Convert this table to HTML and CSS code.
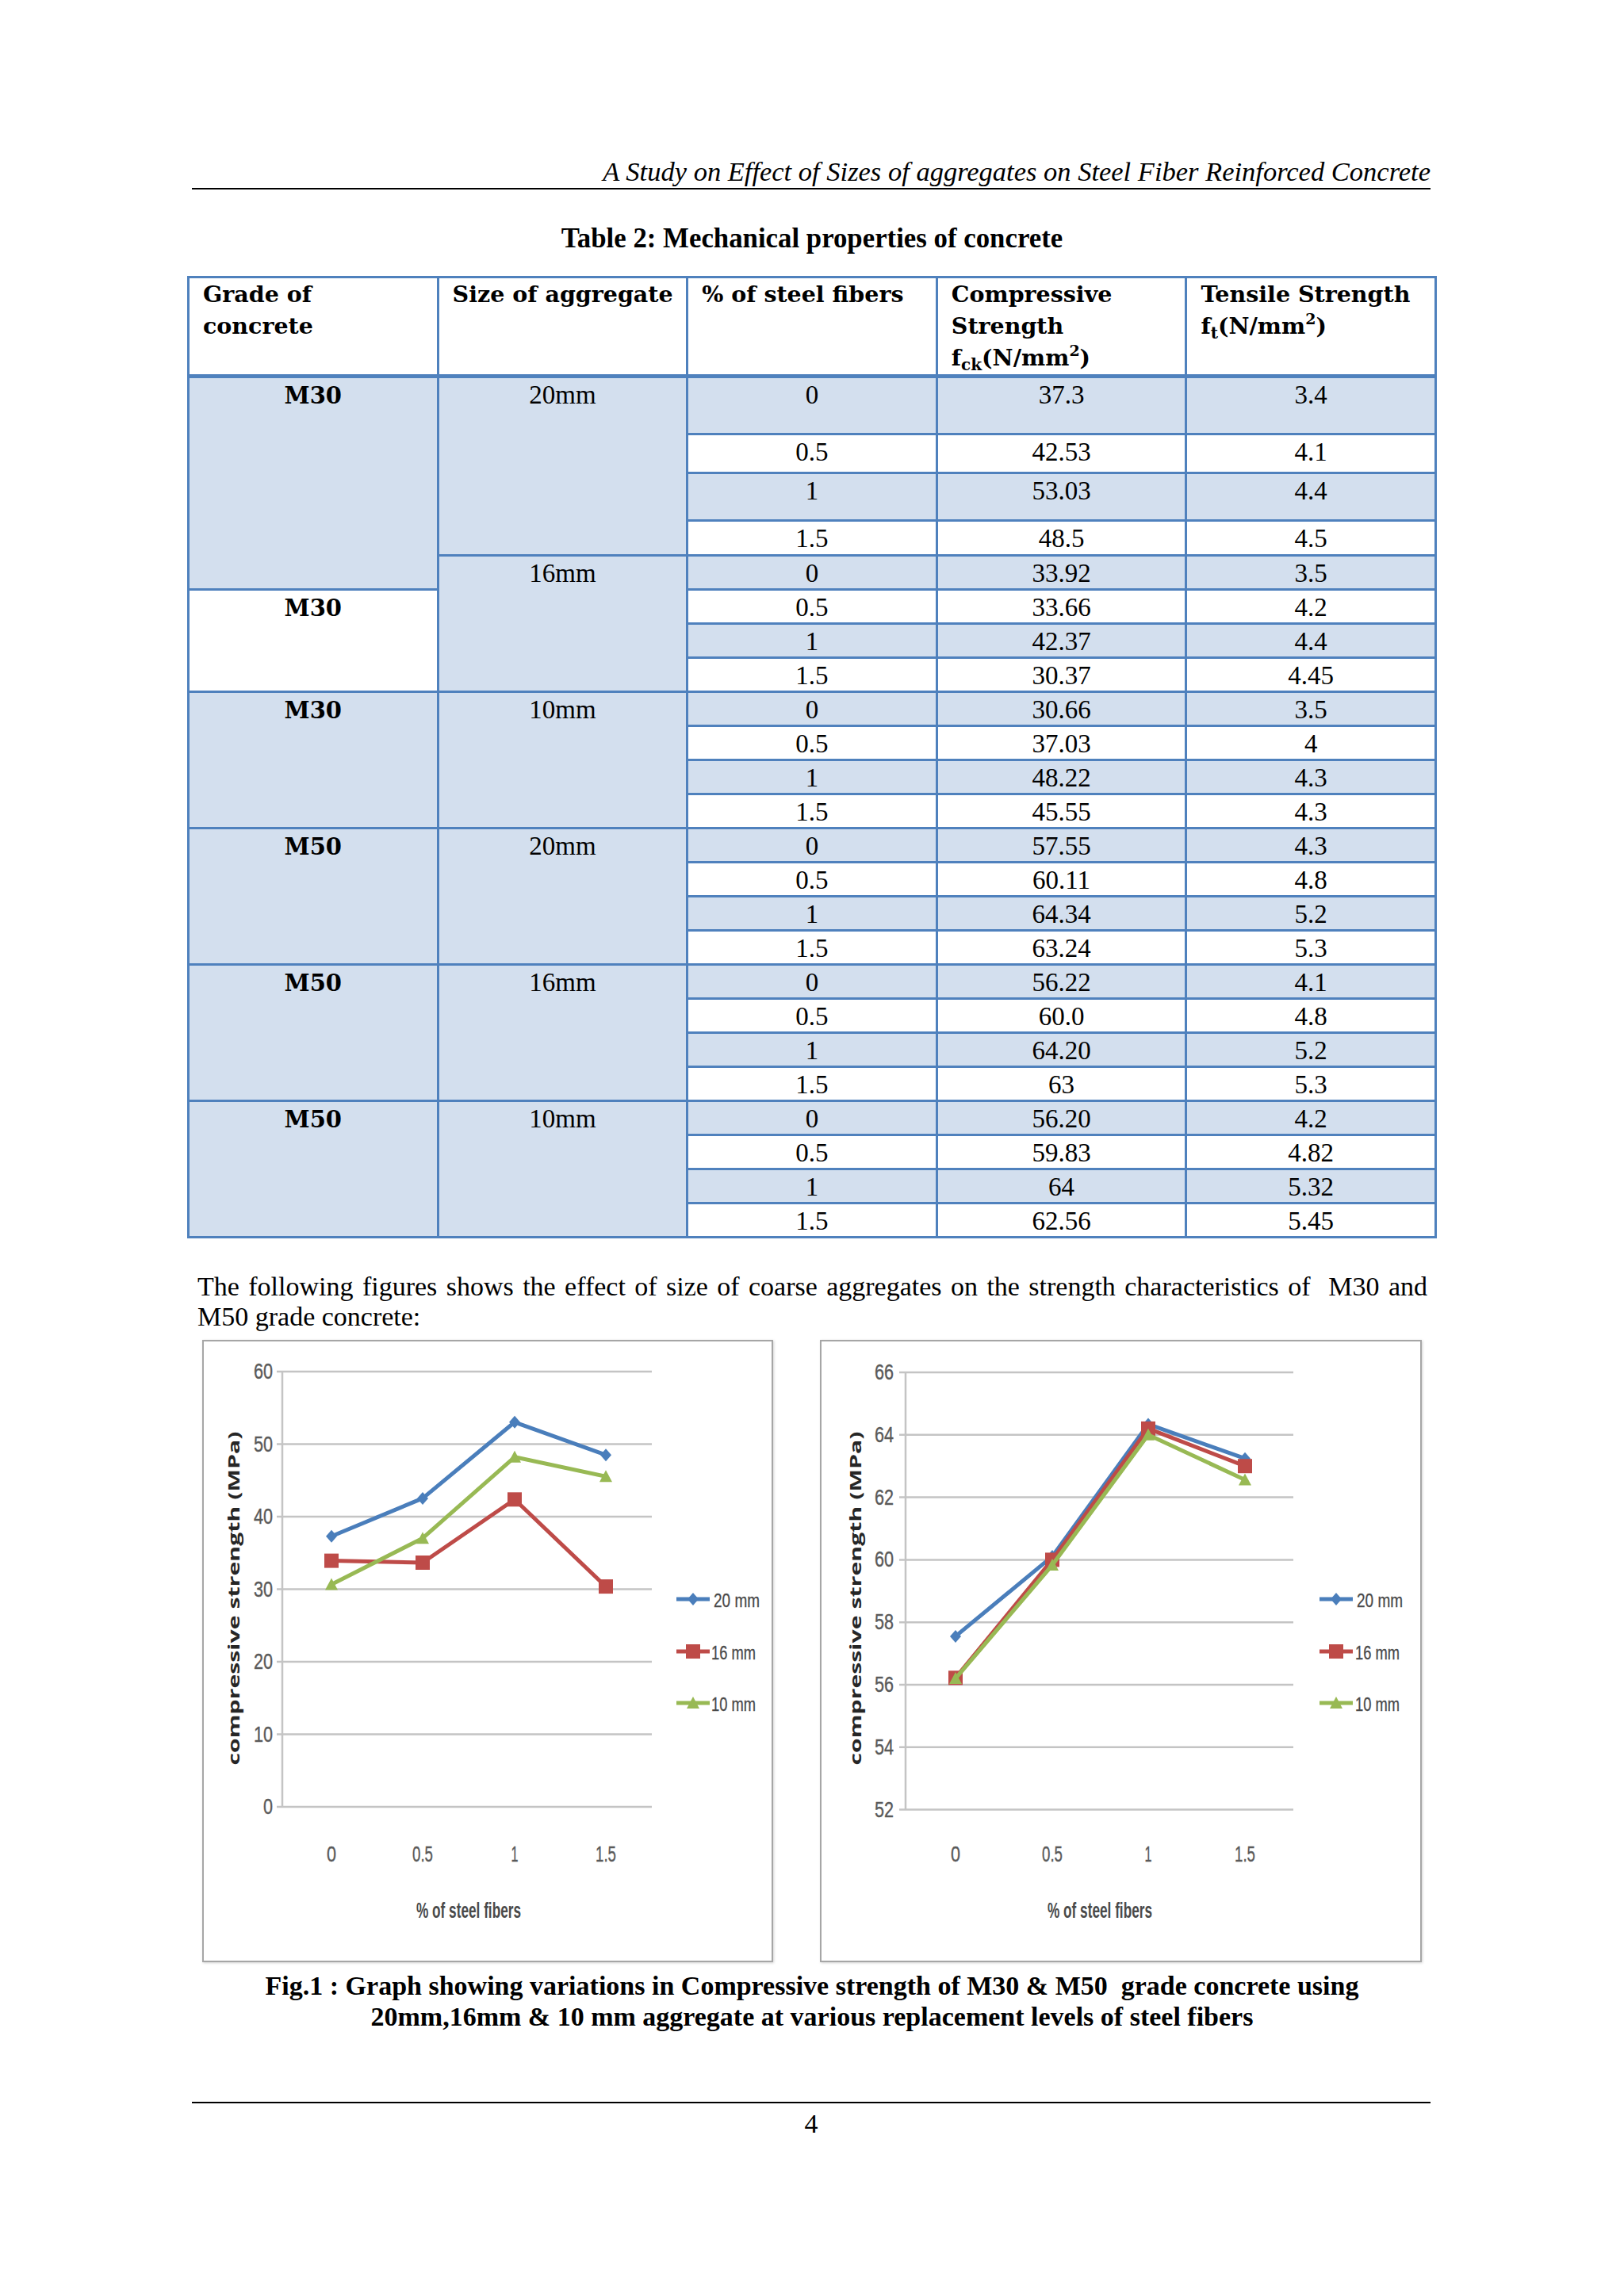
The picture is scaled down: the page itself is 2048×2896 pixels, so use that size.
FILE: index.html
```html
<!DOCTYPE html>
<html lang="en">
<head>
<meta charset="utf-8">
<title>A Study on Effect of Sizes of aggregates on Steel Fiber Reinforced Concrete</title>
<link rel="stylesheet" href="styles.css">
</head>
<body>
<div class="page">
  <div class="running-head">A Study on Effect of Sizes of aggregates on Steel Fiber Reinforced Concrete</div>
  <div class="table-caption">Table 2: Mechanical properties of concrete</div>

  <div class="grid-table">
    <div class="cell head">Grade of<br>concrete</div>
    <div class="cell head">Size of aggregate</div>
    <div class="cell head">% of steel fibers</div>
    <div class="cell head">Compressive<br>Strength<br>f<span class="sub">ck</span>(N/mm<span class="sup">2</span>)</div>
    <div class="cell head">Tensile Strength<br>f<span class="sub">t</span>(N/mm<span class="sup">2</span>)</div>

    <div class="cell grade shade span5">M30</div>
    <div class="cell shade span4">20mm</div>
    <div class="cell shade">0</div><div class="cell shade">37.3</div><div class="cell shade">3.4</div>
    <div class="cell">0.5</div><div class="cell">42.53</div><div class="cell">4.1</div>
    <div class="cell shade">1</div><div class="cell shade">53.03</div><div class="cell shade">4.4</div>
    <div class="cell">1.5</div><div class="cell">48.5</div><div class="cell">4.5</div>

    <div class="cell shade span4">16mm</div>
    <div class="cell shade">0</div><div class="cell shade">33.92</div><div class="cell shade">3.5</div>
    <div class="cell grade span3">M30</div>
    <div class="cell">0.5</div><div class="cell">33.66</div><div class="cell">4.2</div>
    <div class="cell shade">1</div><div class="cell shade">42.37</div><div class="cell shade">4.4</div>
    <div class="cell">1.5</div><div class="cell">30.37</div><div class="cell">4.45</div>

    <div class="cell grade shade span4">M30</div>
    <div class="cell shade span4">10mm</div>
    <div class="cell shade">0</div><div class="cell shade">30.66</div><div class="cell shade">3.5</div>
    <div class="cell">0.5</div><div class="cell">37.03</div><div class="cell">4</div>
    <div class="cell shade">1</div><div class="cell shade">48.22</div><div class="cell shade">4.3</div>
    <div class="cell">1.5</div><div class="cell">45.55</div><div class="cell">4.3</div>

    <div class="cell grade shade span4">M50</div>
    <div class="cell shade span4">20mm</div>
    <div class="cell shade">0</div><div class="cell shade">57.55</div><div class="cell shade">4.3</div>
    <div class="cell">0.5</div><div class="cell">60.11</div><div class="cell">4.8</div>
    <div class="cell shade">1</div><div class="cell shade">64.34</div><div class="cell shade">5.2</div>
    <div class="cell">1.5</div><div class="cell">63.24</div><div class="cell">5.3</div>

    <div class="cell grade shade span4">M50</div>
    <div class="cell shade span4">16mm</div>
    <div class="cell shade">0</div><div class="cell shade">56.22</div><div class="cell shade">4.1</div>
    <div class="cell">0.5</div><div class="cell">60.0</div><div class="cell">4.8</div>
    <div class="cell shade">1</div><div class="cell shade">64.20</div><div class="cell shade">5.2</div>
    <div class="cell">1.5</div><div class="cell">63</div><div class="cell">5.3</div>

    <div class="cell grade shade span4">M50</div>
    <div class="cell shade span4">10mm</div>
    <div class="cell shade">0</div><div class="cell shade">56.20</div><div class="cell shade">4.2</div>
    <div class="cell">0.5</div><div class="cell">59.83</div><div class="cell">4.82</div>
    <div class="cell shade">1</div><div class="cell shade">64</div><div class="cell shade">5.32</div>
    <div class="cell">1.5</div><div class="cell">62.56</div><div class="cell">5.45</div>
  </div>

  <p class="lead">The following figures shows the effect of size of coarse aggregates on the strength characteristics of&nbsp; M30 and M50 grade concrete:</p>

  <div class="figures">
    <div class="chart chart-a">
      <svg class="plot" width="716" height="781" viewBox="2 2 716 781">
        <defs>
          <marker id="mk-dia" viewBox="-9 -9 18 18" markerWidth="18" markerHeight="18" markerUnits="userSpaceOnUse" refX="0" refY="0"><path d="M0 -8L7 0 0 8 -7 0z" fill="#4a7ebb"/></marker>
          <marker id="mk-sq" viewBox="-10 -10 20 20" markerWidth="20" markerHeight="20" markerUnits="userSpaceOnUse" refX="0" refY="0"><rect x="-9" y="-9" width="18" height="18" fill="#be4b48"/></marker>
          <marker id="mk-tri" viewBox="-10 -10 20 20" markerWidth="20" markerHeight="20" markerUnits="userSpaceOnUse" refX="0" refY="0"><path d="M0 -8L8 7 -8 7z" fill="#98b954"/></marker>
        </defs>
        <g class="grid">
          <line x1="94" y1="40" x2="567" y2="40"/>
          <line x1="94" y1="131.5" x2="567" y2="131.5"/>
          <line x1="94" y1="223" x2="567" y2="223"/>
          <line x1="94" y1="314.5" x2="567" y2="314.5"/>
          <line x1="94" y1="406" x2="567" y2="406"/>
          <line x1="94" y1="497.5" x2="567" y2="497.5"/>
          <line x1="94" y1="589" x2="567" y2="589"/>
          <line x1="101" y1="40" x2="101" y2="589"/>
        </g>
        <g class="tick">
          <text x="89" y="49" text-anchor="end" textLength="24" lengthAdjust="spacingAndGlyphs">60</text>
          <text x="89" y="140.5" text-anchor="end" textLength="24" lengthAdjust="spacingAndGlyphs">50</text>
          <text x="89" y="232" text-anchor="end" textLength="24" lengthAdjust="spacingAndGlyphs">40</text>
          <text x="89" y="323.5" text-anchor="end" textLength="24" lengthAdjust="spacingAndGlyphs">30</text>
          <text x="89" y="415" text-anchor="end" textLength="24" lengthAdjust="spacingAndGlyphs">20</text>
          <text x="89" y="506.5" text-anchor="end" textLength="24" lengthAdjust="spacingAndGlyphs">10</text>
          <text x="89" y="598" text-anchor="end" textLength="12" lengthAdjust="spacingAndGlyphs">0</text>
          <text x="163" y="658" text-anchor="middle" textLength="12" lengthAdjust="spacingAndGlyphs">0</text>
          <text x="278" y="658" text-anchor="middle" textLength="26" lengthAdjust="spacingAndGlyphs">0.5</text>
          <text x="394" y="658" text-anchor="middle" textLength="9" lengthAdjust="spacingAndGlyphs">1</text>
          <text x="509" y="658" text-anchor="middle" textLength="26" lengthAdjust="spacingAndGlyphs">1.5</text>
        </g>
        <text class="axis-title" x="336" y="729" text-anchor="middle" textLength="132" lengthAdjust="spacingAndGlyphs">% of steel fibers</text>
        <text class="y-title" x="0" y="0" transform="translate(47 326) rotate(-90)" text-anchor="middle" textLength="421" lengthAdjust="spacingAndGlyphs">compressive strength (MPa)</text>
        <polyline class="series s-blue" points="163,247.7 278,199.9 394,103.8 509,145.2"/>
        <polyline class="series s-red" points="163,278.6 278,281 394,201.3 509,311.1"/>
        <polyline class="series s-green" points="163,308.5 278,250.2 394,147.8 509,172.2"/>
        <path class="key s-blue" d="M598 327H619H640"/>
        <path class="key s-red" d="M598 393H619H640"/>
        <path class="key s-green" d="M598 458H619H640"/>
        <g class="legend">
          <text x="645" y="337" textLength="58" lengthAdjust="spacingAndGlyphs">20 mm</text>
          <text x="642" y="403" textLength="56" lengthAdjust="spacingAndGlyphs">16 mm</text>
          <text x="642" y="468" textLength="56" lengthAdjust="spacingAndGlyphs">10 mm</text>
        </g>
      </svg>
    </div>
    <div class="chart chart-b">
      <svg class="plot" width="755" height="781" viewBox="2 2 755 781">
        <g class="grid">
          <line x1="100" y1="41" x2="597" y2="41"/>
          <line x1="100" y1="119.8" x2="597" y2="119.8"/>
          <line x1="100" y1="198.6" x2="597" y2="198.6"/>
          <line x1="100" y1="277.4" x2="597" y2="277.4"/>
          <line x1="100" y1="356.2" x2="597" y2="356.2"/>
          <line x1="100" y1="435" x2="597" y2="435"/>
          <line x1="100" y1="513.8" x2="597" y2="513.8"/>
          <line x1="100" y1="592.6" x2="597" y2="592.6"/>
          <line x1="108" y1="41" x2="108" y2="592.6"/>
        </g>
        <g class="tick">
          <text x="93" y="50" text-anchor="end" textLength="24" lengthAdjust="spacingAndGlyphs">66</text>
          <text x="93" y="128.8" text-anchor="end" textLength="24" lengthAdjust="spacingAndGlyphs">64</text>
          <text x="93" y="207.6" text-anchor="end" textLength="24" lengthAdjust="spacingAndGlyphs">62</text>
          <text x="93" y="286.4" text-anchor="end" textLength="24" lengthAdjust="spacingAndGlyphs">60</text>
          <text x="93" y="365.2" text-anchor="end" textLength="24" lengthAdjust="spacingAndGlyphs">58</text>
          <text x="93" y="444" text-anchor="end" textLength="24" lengthAdjust="spacingAndGlyphs">56</text>
          <text x="93" y="522.8" text-anchor="end" textLength="24" lengthAdjust="spacingAndGlyphs">54</text>
          <text x="93" y="601.6" text-anchor="end" textLength="24" lengthAdjust="spacingAndGlyphs">52</text>
          <text x="171" y="658" text-anchor="middle" textLength="12" lengthAdjust="spacingAndGlyphs">0</text>
          <text x="293" y="658" text-anchor="middle" textLength="26" lengthAdjust="spacingAndGlyphs">0.5</text>
          <text x="414" y="658" text-anchor="middle" textLength="9" lengthAdjust="spacingAndGlyphs">1</text>
          <text x="536" y="658" text-anchor="middle" textLength="26" lengthAdjust="spacingAndGlyphs">1.5</text>
        </g>
        <text class="axis-title" x="353" y="729" text-anchor="middle" textLength="132" lengthAdjust="spacingAndGlyphs">% of steel fibers</text>
        <text class="y-title" x="0" y="0" transform="translate(52 326) rotate(-90)" text-anchor="middle" textLength="421" lengthAdjust="spacingAndGlyphs">compressive strength (MPa)</text>
        <polyline class="series s-blue" points="171,373.9 293,273.1 414,106.4 536,149.7"/>
        <polyline class="series s-red" points="171,426.3 293,277.4 414,111.9 536,159.2"/>
        <polyline class="series s-green" points="171,427.1 293,284.1 414,119.8 536,176.5"/>
        <path class="key s-blue" d="M630 327H651H672"/>
        <path class="key s-red" d="M630 393H651H672"/>
        <path class="key s-green" d="M630 458H651H672"/>
        <g class="legend">
          <text x="677" y="337" textLength="58" lengthAdjust="spacingAndGlyphs">20 mm</text>
          <text x="675" y="403" textLength="56" lengthAdjust="spacingAndGlyphs">16 mm</text>
          <text x="675" y="468" textLength="56" lengthAdjust="spacingAndGlyphs">10 mm</text>
        </g>
      </svg>
    </div>
  </div>

  <div class="fig-caption">Fig.1 : Graph showing variations in Compressive strength of M30 &amp; M50&nbsp; grade concrete using<br>20mm,16mm &amp; 10 mm aggregate at various replacement levels of steel fibers</div>

  <div class="page-foot">4</div>
</div>
</body>
</html>
```

FILE: styles.css
```css
html, body {
  margin: 0;
  padding: 0;
  background: #ffffff;
  color: #000000;
}

.page {
  width: 1576px;
  margin-left: 236px;
  font-family: "Liberation Serif", "Times New Roman", serif;
}

.running-head {
  margin: 196px 8px 0 6px;
  padding-bottom: 1px;
  border-bottom: 2px solid #000;
  font-style: italic;
  font-size: 34.5px;
  line-height: 40px;
  text-align: right;
}

.table-caption {
  margin-top: 42px;
  font-weight: bold;
  font-size: 34.8px;
  line-height: 40px;
  text-align: center;
}

.grid-table {
  margin-top: 27px;
  display: grid;
  grid-template-columns: repeat(5, 1fr);
  grid-template-rows: 123px 69px 46px 57px 41px repeat(20, 40px);
  gap: 3px;
  padding: 3px;
  background: #4f81bd;
}

.cell {
  background: #ffffff;
  text-align: center;
  font-size: 33px;
  line-height: 36px;
  padding-top: 3px;
  box-sizing: border-box;
  min-width: 0;
}

.cell.shade {
  background: #d3dfee;
}

.cell.head {
  text-align: left;
  padding: 0 4px 0 17px;
  font-family: "DejaVu Serif", "Liberation Serif", serif;
  font-weight: bold;
  font-size: 28.5px;
  line-height: 40px;
  white-space: nowrap;
  border-bottom: 2px solid #4f81bd;
}

.cell.grade {
  font-family: "DejaVu Serif", "Liberation Serif", serif;
  font-weight: bold;
  font-size: 29px;
  line-height: 34px;
  padding-top: 5px;
}

.span5 { grid-row: span 5; }
.span4 { grid-row: span 4; }
.span3 { grid-row: span 3; }

.sub {
  font-size: 20px;
  vertical-align: -6px;
  line-height: 0;
}

.sup {
  font-size: 19px;
  vertical-align: 12px;
  line-height: 0;
}

.lead {
  margin: 42px 12px 0 13px;
  font-size: 34px;
  line-height: 38px;
  text-align: justify;
}

.figures {
  display: flex;
  gap: 59px;
  margin-top: 10px;
  padding-left: 19px;
}

.chart {
  box-sizing: border-box;
  height: 785px;
  border: 2px solid #a6a6a6;
  box-shadow: 1px 1px 3px rgba(0, 0, 0, 0.18);
  background: #ffffff;
  overflow: hidden;
}

.chart-a { width: 720px; }
.chart-b { width: 759px; }

.plot {
  display: block;
}

.grid line {
  stroke: #c4c4c4;
  stroke-width: 2.5;
}

.tick text {
  font-family: "Liberation Sans", Arial, sans-serif;
  font-size: 28px;
  fill: #5a5a5a;
  stroke: #5a5a5a;
  stroke-width: 0.4;
}

.axis-title {
  font-family: "Liberation Sans", Arial, sans-serif;
  font-size: 27px;
  font-weight: bold;
  fill: #4a4a4a;
}

.y-title {
  font-family: "Open Sans", "Liberation Sans", sans-serif;
  font-size: 19px;
  font-weight: bold;
  fill: #262626;
}

.legend text {
  font-family: "Liberation Sans", Arial, sans-serif;
  font-size: 23px;
  fill: #4a4a4a;
  stroke: #4a4a4a;
  stroke-width: 0.3;
}

.series, .key {
  fill: none;
  stroke-width: 5;
  stroke-linejoin: round;
}

.s-blue { stroke: #4a7ebb; }
.s-red { stroke: #be4b48; }
.s-green { stroke: #98b954; }

.series.s-blue {
  marker-start: url(#mk-dia);
  marker-mid: url(#mk-dia);
  marker-end: url(#mk-dia);
}

.series.s-red {
  marker-start: url(#mk-sq);
  marker-mid: url(#mk-sq);
  marker-end: url(#mk-sq);
}

.series.s-green {
  marker-start: url(#mk-tri);
  marker-mid: url(#mk-tri);
  marker-end: url(#mk-tri);
}

.key.s-blue { marker-mid: url(#mk-dia); }
.key.s-red { marker-mid: url(#mk-sq); }
.key.s-green { marker-mid: url(#mk-tri); }

.fig-caption {
  margin-top: 10px;
  font-weight: bold;
  font-size: 34px;
  line-height: 39px;
  text-align: center;
}

.page-foot {
  margin: 88px 8px 0 6px;
  padding-top: 6px;
  border-top: 2px solid #000;
  font-size: 34px;
  line-height: 40px;
  text-align: center;
}
```
